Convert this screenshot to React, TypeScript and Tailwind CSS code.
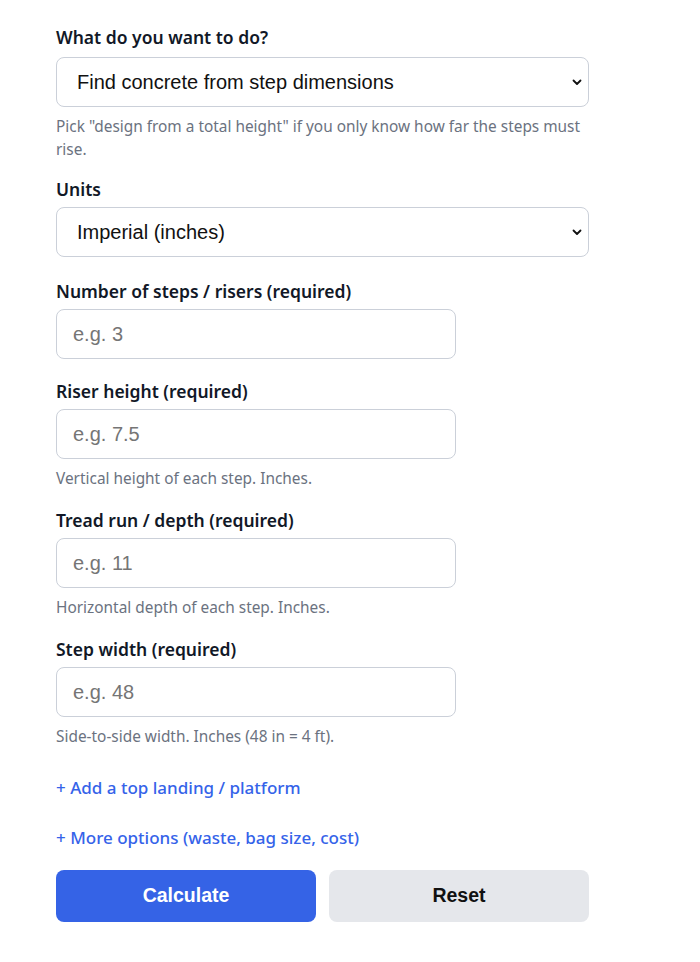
import React, { useState } from "react";

const labelCls = "block text-[17.5px] leading-6 font-semibold text-[#111827] mb-[6px]";
const helpCls = "mt-2 text-[15.4px] leading-[23px] text-[#6b7280]";
const inputCls =
  "block w-[400px] h-[50px] rounded-lg border border-[#cbd0d9] bg-white px-4 text-[20px] text-[#111] placeholder:text-[#757575] outline-none";

const Chevron = () => (
  <svg
    className="pointer-events-none absolute right-[6px] top-1/2 -translate-y-1/2"
    width="12"
    height="12"
    viewBox="0 0 12 12"
    fill="none"
  >
    <path d="M2.5 4.5 6 8l3.5-3.5" stroke="#111" strokeWidth="1.8" strokeLinecap="round" strokeLinejoin="round" />
  </svg>
);

const Select: React.FC<{ options: string[] }> = ({ options }) => (
  <div className="relative w-[533px]">
    <select
      className="block w-full h-[50px] appearance-none rounded-lg border border-[#cbd0d9] bg-white pl-5 pr-8 text-[20px] text-[#111] outline-none"
      style={{ fontFamily: '"Liberation Sans", Arial, sans-serif' }}
    >
      {options.map((o) => (
        <option key={o}>{o}</option>
      ))}
    </select>
    <Chevron />
  </div>
);

const fields = [
  { label: "Number of steps / risers (required)", ph: "e.g. 3" },
  { label: "Riser height (required)", ph: "e.g. 7.5", help: "Vertical height of each step. Inches." },
  { label: "Tread run / depth (required)", ph: "e.g. 11", help: "Horizontal depth of each step. Inches." },
  { label: "Step width (required)", ph: "e.g. 48", help: "Side-to-side width. Inches (48 in = 4 ft)." },
];

export default function App() {
  const [vals, setVals] = useState<string[]>(["", "", "", ""]);

  return (
    <div className="min-h-screen bg-white" style={{ fontFamily: '"Noto Sans", "Open Sans", sans-serif' }}>
      <div className="w-[533px] ml-14 pt-[25px] pb-10">
        <div className="mb-4">
          <label className="block text-[17.5px] leading-6 font-semibold text-[#111827] mb-2">
            What do you want to do?
          </label>
          <Select options={["Find concrete from step dimensions", "Design from a total height"]} />
          <p className={helpCls}>
            Pick "design from a total height" if you only know how far the steps must rise.
          </p>
        </div>

        <div className="mb-[22px]">
          <label className={labelCls}>Units</label>
          <Select options={["Imperial (inches)", "Metric (cm)"]} />
        </div>

        {fields.map((f, i) => (
          <div key={f.label} className={f.help ? "mb-[18px]" : "mb-5"}>
            <label className={labelCls}>{f.label}</label>
            <input
              type="text"
              inputMode="decimal"
              placeholder={f.ph}
              value={vals[i]}
              onChange={(e) => {
                const next = [...vals];
                next[i] = e.target.value;
                setVals(next);
              }}
              className={inputCls}
              style={{ fontFamily: '"Liberation Sans", Arial, sans-serif' }}
            />
            {f.help && <p className={helpCls}>{f.help}</p>}
          </div>
        ))}

        <div className="flex flex-col gap-[26px] mt-7">
          <button className="self-start text-[17px] leading-6 font-medium text-[#3563e9]">
            + Add a top landing / platform
          </button>
          <button className="self-start text-[17px] leading-6 font-medium text-[#3563e9]">
            + More options (waste, bag size, cost)
          </button>
        </div>

        <div
          className="grid grid-cols-2 gap-[13px] mt-5"
          style={{ fontFamily: '"Liberation Sans", Arial, sans-serif' }}
        >
          <button className="h-[52px] rounded-lg bg-[#3563e6] text-white text-[19.5px] font-bold">Calculate</button>
          <button className="h-[52px] rounded-lg bg-[#e5e7eb] text-[#111] text-[19.5px] font-bold">Reset</button>
        </div>
      </div>
    </div>
  );
}
